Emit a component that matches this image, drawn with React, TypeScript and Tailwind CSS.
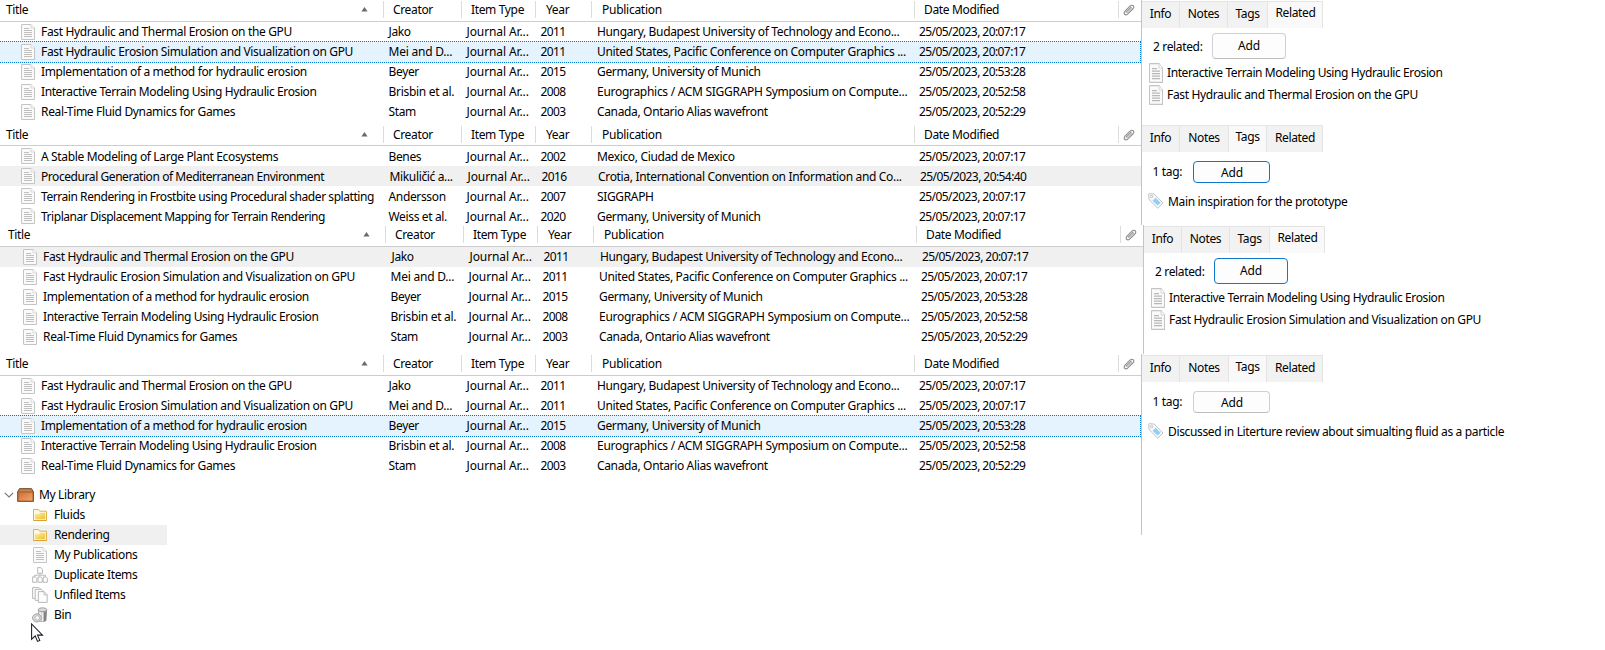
import React from "react";

type Row = { title: string; creator: string; year: string; pub: string; date: string; state?: "selected" | "inactive" };

const tracking: Record<string, string> = {
  "Fast Hydraulic Erosion Simulation and Visualization on GPU": "tracking-[-0.35px]",
  "Interactive Terrain Modeling Using Hydraulic Erosion": "tracking-[-0.4px]",
  "Real-Time Fluid Dynamics for Games": "tracking-[-0.33px]",
  "A Stable Modeling of Large Plant Ecosystems": "tracking-[-0.35px]",
  "Procedural Generation of Mediterranean Environment": "tracking-[-0.43px]",
  "Terrain Rendering in Frostbite using Procedural shader splatting": "tracking-[-0.44px]",
  "Triplanar Displacement Mapping for Terrain Rendering": "tracking-[-0.46px]",
  "Eurographics / ACM SIGGRAPH Symposium on Compute...": "tracking-[-0.29px]",
  "United States, Pacific Conference on Computer Graphics ...": "tracking-[-0.34px]",
  "Hungary, Budapest University of Technology and Econo...": "tracking-[-0.35px]",
  "Crotia, International Convention on Information and Co...": "tracking-[-0.33px]",
  "Journal Ar...": "tracking-[-0.1px]",
  "Mei and D...": "tracking-[-0.22px]",
  "Brisbin et al.": "tracking-[-0.3px]",
  Publication: "tracking-[-0.27px]",
  Add: "tracking-[-0.1px]",
};

function Text({ children, className = "" }: { children: string; className?: string }) {
  const digits = /^\d{4}$/.test(children) ? "tracking-[-0.65px]" : /^\d\d\//.test(children) ? "tracking-[-0.57px]" : "";
  return <span className={`whitespace-nowrap ${tracking[children] ?? (digits || "tracking-[-0.35px]")} ${className}`}>{children}</span>;
}

const jako: Row = { title: "Fast Hydraulic and Thermal Erosion on the GPU", creator: "Jako", year: "2011", pub: "Hungary, Budapest University of Technology and Econo...", date: "25/05/2023, 20:07:17" };
const mei: Row = { title: "Fast Hydraulic Erosion Simulation and Visualization on GPU", creator: "Mei and D...", year: "2011", pub: "United States, Pacific Conference on Computer Graphics ...", date: "25/05/2023, 20:07:17" };
const beyer: Row = { title: "Implementation of a method for hydraulic erosion", creator: "Beyer", year: "2015", pub: "Germany, University of Munich", date: "25/05/2023, 20:53:28" };
const brisbin: Row = { title: "Interactive Terrain Modeling Using Hydraulic Erosion", creator: "Brisbin et al.", year: "2008", pub: "Eurographics / ACM SIGGRAPH Symposium on Compute...", date: "25/05/2023, 20:52:58" };
const stam: Row = { title: "Real-Time Fluid Dynamics for Games", creator: "Stam", year: "2003", pub: "Canada, Ontario Alias wavefront", date: "25/05/2023, 20:52:29" };

const rendering: Row[] = [
  { title: "A Stable Modeling of Large Plant Ecosystems", creator: "Benes", year: "2002", pub: "Mexico, Ciudad de Mexico", date: "25/05/2023, 20:07:17" },
  { title: "Procedural Generation of Mediterranean Environment", creator: "Mikuličić a...", year: "2016", pub: "Crotia, International Convention on Information and Co...", date: "25/05/2023, 20:54:40", state: "inactive" },
  { title: "Terrain Rendering in Frostbite using Procedural shader splatting", creator: "Andersson", year: "2007", pub: "SIGGRAPH", date: "25/05/2023, 20:07:17" },
  { title: "Triplanar Displacement Mapping for Terrain Rendering", creator: "Weiss et al.", year: "2020", pub: "Germany, University of Munich", date: "25/05/2023, 20:07:17" },
];

function DocIcon({ tall = false }: { tall?: boolean }) {
  return (
    <svg width="14" height={tall ? 20 : 16} viewBox="0 0 14 16" preserveAspectRatio="none" className="shrink-0">
      <path d="M1 .5h9L13.5 4v11.5H1Q.5 15.5.5 15V1Q.5.5 1 .5Z" fill="#fafafa" stroke="#c4c4c4" />
      <path d="M10 .5V4h3.5" fill="#fff" stroke="#cfcfcf" strokeWidth=".8" />
      <path d="M3 4.5h5M3 6.5h8M3 8.5h8M3 10.5h8M3 12.5h8" stroke="#b8b8b8" strokeWidth=".9" />
    </svg>
  );
}

function Clip() {
  return (
    <svg width="12" height="12" viewBox="0 0 12 12" fill="none" strokeLinecap="round" strokeLinejoin="round">
      <path d="M3.2 8.2 8.2 3.2M2 7.2 7 2.2Q8.8.6 10.3 1.8 11.5 3.2 9.8 5L4.6 10.2Q3 11.4 1.6 10.3.6 9 2 7.2Z" stroke="#8d8d8d" strokeWidth="1.1" />
      <path d="M4.2 8.6 8.6 4.2" stroke="#c2c2c2" strokeWidth="1.3" />
    </svg>
  );
}

function TagIcon() {
  return (
    <svg width="16" height="16" viewBox="0 0 16 16" className="shrink-0">
      <path d="M.7 1.2Q.7.7 1.2.7L6.2 1 15 10 9.7 15.3 1 6.4Z" fill="#f8f8f8" stroke="#bfc3c6" strokeLinejoin="round" />
      <path d="M7.6 4.7 12.6 9.7 9.5 12.6 4.6 7.8Z" fill="#8fd0fb" />
      <circle cx="3.6" cy="3.6" r="1.1" fill="#fff" stroke="#b0b0b0" strokeWidth=".8" />
    </svg>
  );
}

const columns = [
  { label: "Creator", w: "w-[78px]", head: "pl-[9px]", cell: "pl-[5.5px]" },
  { label: "Item Type", w: "w-[74px]", head: "pl-[9px]", cell: "pl-[5.5px]" },
  { label: "Year", w: "w-[56px]", head: "pl-[10px]", cell: "pl-[5.5px]" },
  { label: "Publication", w: "w-[323px]", head: "pl-[10px]", cell: "pl-[6px]" },
  { label: "Date Modified", w: "w-[204px]", head: "pl-[9px]", cell: "pl-[5px]" },
];

function Table({ rows, shifted = false, low = false }: { rows: Row[]; shifted?: boolean; low?: boolean }) {
  const drop = low ? "relative top-px" : "";
  return (
    <div className={shifted ? "w-[1143px]" : "w-[1141px]"}>
      <div className={`flex h-[22px] border-b border-[#cdcdcd] pt-px ${shifted ? "pl-[2px]" : ""}`}>
        <div className={`flex h-[17px] w-[383px] items-center justify-between pr-[15px] pl-[6px] ${drop}`}>
          <Text>Title</Text>
          <svg width="7" height="5" viewBox="0 0 7 5"><path d="M3.5 0 6.6 4.4H.4Z" fill="#6a6a6a" /></svg>
        </div>
        {columns.map((c) => (
          <div key={c.label} className={`flex h-[17px] items-center border-l border-[#dcdcdc] ${c.head} ${c.w} ${drop}`}><Text>{c.label}</Text></div>
        ))}
        <div className={`flex h-[17px] items-center border-l border-[#dcdcdc] pt-px pl-[4px] ${drop}`}><Clip /></div>
      </div>
      {rows.map((r) => (
        <div key={r.title} className={`relative flex h-[20px] items-center ${shifted ? "pl-[2px]" : ""} ${r.state === "selected" ? "bg-[#e5f3ff]" : r.state === "inactive" ? "bg-[#f0f0f0]" : ""}`}>
          {r.state === "selected" && <div className="absolute -top-px right-0 -bottom-px -left-px border border-dotted border-[#0078d7] bg-[#e5f3ff]" />}
          <div className={`relative flex shrink-0 items-center gap-[6px] pl-[21px] ${r.state === "inactive" ? "w-[384px]" : "w-[383px]"}`}><DocIcon /><Text className={drop}>{r.title}</Text></div>
          {[r.creator, "Journal Ar...", r.year, r.pub, r.date].map((v, i) => (
            <div key={i} className={`relative flex shrink-0 ${columns[i].cell} ${columns[i].w}`}><Text className={drop}>{v}</Text></div>
          ))}
        </div>
      ))}
    </div>
  );
}

function Tabs({ active }: { active: "Tags" | "Related" }) {
  const widths = active === "Tags" ? ["w-[38px]", "w-[49px]", "w-[38px]", "w-[56px]"] : ["w-[38px]", "w-[48px]", "w-[40px]", "w-[55px]"];
  return (
    <div className="flex h-[27px]">
      {["Info", "Notes", "Tags", "Related"].map((t, i) => (
        <div key={t} className={`flex justify-center border-t border-r border-[#e4e4e4] ${t === "Related" ? "pl-px" : ""} ${widths[i]} ${t === active ? "bg-[#f9f9f9] leading-[22px]" : "bg-[#f2f2f2] leading-[24px]"}`}>
          <Text>{t}</Text>
        </div>
      ))}
    </div>
  );
}

function Panel({ active, focused = false, items, height }: { active: "Tags" | "Related"; focused?: boolean; items: string[]; height: string }) {
  const border = focused ? "border-[#1179cc]" : "border-[#d0d0d0] border-b-[#bdbdbd]";
  return (
    <div className={`border-l border-[#c4c4c4] pt-px ${height}`}>
      <Tabs active={active} />
      {active === "Related" ? (
        <>
          <div className="flex pt-[5px] pl-[11px]">
            <Text className="w-[59px] leading-[28px]">{`${items.length} related:`}</Text>
            <button className={`flex h-[26px] w-[74px] justify-center rounded-[4px] border bg-[#fdfdfd] leading-[24px] ${border}`}><Text>Add</Text></button>
          </div>
          <div className="flex flex-col gap-[2px] pt-[2px] pl-[7px]">
            {items.map((t) => <div key={t} className="flex h-[20px] items-center gap-[4px]"><DocIcon tall /><Text>{t}</Text></div>)}
          </div>
        </>
      ) : (
        <>
          <div className="flex pt-[9px] pl-[10.5px]">
            <Text className="w-[40.5px] leading-[22px]">1 tag:</Text>
            <button className={`flex h-[22px] w-[77px] justify-center rounded-[4px] border bg-[#fdfdfd] pl-px leading-[22px] ${border}`}><Text>Add</Text></button>
          </div>
          <div className="mt-[8px] flex h-[20px] items-center gap-[4px] pl-[6px]"><TagIcon /><Text className="pt-[2px]">{items[0]}</Text></div>
        </>
      )}
    </div>
  );
}

function Folder() {
  return (
    <svg width="14" height="12" viewBox="1 1 14 12">
      <defs><linearGradient id="fold" x1="0" y1="0" x2="1" y2="1"><stop offset="0" stopColor="#fff0a0" /><stop offset="1" stopColor="#f0bd2c" /></linearGradient></defs>
      <path d="M1.5 12.5v-11h5l1.2 1.7h6.8v9.3Z" fill="#fff8dc" stroke="#dfb24c" strokeLinejoin="round" />
      <path d="M3.400 11V6.800h3.400L8.200 5.300h4.700V11Z" fill="url(#fold)" stroke="#efcc62" strokeWidth=".6" />
      <path d="M1.500 12.500h13" stroke="#d7a336" />
    </svg>
  );
}

function LibraryBox() {
  return (
    <svg width="17" height="14" viewBox="0 0 17 14">
      <defs><linearGradient id="box" x1="0" y1="0" x2="1" y2="1"><stop offset="0" stopColor="#d06f38" /><stop offset="1" stopColor="#f0a56a" /></linearGradient></defs>
      <path d="M2.500.6h12l2 3.200v9.600H.6V3.800Z" fill="#a9602c" stroke="#7d4a22" strokeWidth=".9" />
      <path d="M2.800 1.200h11.400L15.400 3.600H1.600Z" fill="#b98450" />
      <path d="M1.500 4.600h14v8H1.500Z" fill="url(#box)" />
    </svg>
  );
}

function Page({ d }: { d: string }) {
  return <path d={d} fill="#fcfcfc" stroke="#b2b2b2" strokeWidth=".9" strokeLinejoin="round" />;
}

function Duplicates() {
  return (
    <svg width="16" height="16" viewBox="0 0 16 16">
      <path d="M8 6v2.5M2.5 10V8.2h11V10" fill="none" stroke="#bbb" />
      <Page d="M5.6.6h3.2l1.700 1.700v4H5.600Z" />
      <Page d="M.6 9.900h2.800l1.400 1.400v4H.6Z" />
      <Page d="M6 9.900h2.800l1.400 1.400v4H6Z" />
      <Page d="M11.200 9.900H14l1.400 1.400v4h-4.200Z" />
    </svg>
  );
}

function Unfiled() {
  return (
    <svg width="16" height="16" viewBox="0 0 16 16">
      <Page d="M.6.6h6.400L9 2.600v8.800H.6Z" />
      <Page d="M3.200 2.400H9.600L11.800 4.600v8.800H3.200Z" />
      <Page d="M6.400 4.600h5.600l3.200 3.200v7.600H6.400Z" />
      <path d="M12 4.600v3.200h3.200" fill="none" stroke="#b2b2b2" strokeWidth=".8" />
    </svg>
  );
}

function Bin() {
  return (
    <svg width="16" height="16" viewBox="0 0 16 16">
      <defs><linearGradient id="bin"><stop offset="0" stopColor="#f0f0f0" /><stop offset=".6" stopColor="#c2c2c2" /><stop offset="1" stopColor="#666" /></linearGradient></defs>
      <path d="M6.400 3.200 7 13.800Q10.500 15.600 14 13.800L14.600 3.200Z" fill="url(#bin)" stroke="#8a8a8a" strokeWidth=".7" />
      <path d="M8.600 5.400v8.400M10.600 5.400v9" stroke="#f6f6f6" strokeWidth=".9" />
      <path d="M12.600 5.400v8.400" stroke="#777" strokeWidth=".9" />
      <ellipse cx="10.500" cy="2.700" rx="4.300" ry="1.900" fill="#dcdcdc" stroke="#8a8a8a" strokeWidth=".8" />
      <ellipse cx="4.900" cy="10.900" rx="4.400" ry="4.100" fill="#d9d9d9" stroke="#949494" strokeWidth=".8" />
      <ellipse cx="5.300" cy="10.900" rx="2.300" ry="2.200" fill="#f8f8f8" stroke="#a8a8a8" strokeWidth=".7" />
    </svg>
  );
}

const tree = [
  { label: "Fluids", icon: <Folder /> },
  { label: "Rendering", icon: <Folder /> },
  { label: "My Publications", icon: <DocIcon /> },
  { label: "Duplicate Items", icon: <Duplicates /> },
  { label: "Unfiled Items", icon: <Unfiled /> },
  { label: "Bin", icon: <Bin /> },
];

function Library() {
  return (
    <div className="relative w-[167px]">
      <div className="flex h-[20px] items-center pl-[4px]">
        <svg width="10" height="6" viewBox="0 0 10 6" fill="none" stroke="#777" strokeWidth="1.2"><path d="m.8.8 4.200 4.200L9.200.8" /></svg>
        <span className="mr-[5px] ml-[3px]"><LibraryBox /></span>
        <Text>My Library</Text>
      </div>
      {tree.map((n) => (
        <div key={n.label} className={`flex h-[20px] items-center pl-[32px] ${n.label === "Rendering" ? "bg-[#f0f0f0]" : ""}`}>
          <span className="mr-[6px] flex w-[16px] justify-center">{n.icon}</span><Text>{n.label}</Text>
        </div>
      ))}
      <svg width="13" height="20" viewBox="0 0 13 20" className="absolute top-[138px] left-[31px]">
        <path d="M.6 1v15.200l3.600-3.400 2.300 5.600 2.300-1-2.300-5.300h5Z" fill="#fff" stroke="#1a1a26" strokeWidth="1.05" />
      </svg>
    </div>
  );
}

export default function App() {
  return (
    <div className="h-[650px] w-[1605px] overflow-hidden bg-white font-['Noto_Sans',sans-serif] text-[12px] leading-[20px] text-black">
      <section className="flex h-[124px]">
        <Table rows={[jako, { ...mei, state: "selected" }, beyer, brisbin, stam]} />
        <Panel height="h-[124px]" active="Related" items={[brisbin.title, jako.title]} />
      </section>
      <section className="flex h-[101px]">
        <Table rows={rendering} low />
        <Panel height="h-[101px]" active="Tags" focused items={["Main inspiration for the prototype"]} />
      </section>
      <section className="flex h-[129px]">
        <Table shifted rows={[{ ...jako, state: "inactive" }, mei, beyer, brisbin, stam]} />
        <Panel height="h-[129px]" active="Related" focused items={[brisbin.title, mei.title]} />
      </section>
      <section className="flex">
        <div>
          <div className="h-[131px]"><Table rows={[jako, mei, { ...beyer, state: "selected" }, brisbin, stam]} /></div>
          <Library />
        </div>
        <Panel height="h-[181px]" active="Tags" items={["Discussed in Literture review about simualting fluid as a particle"]} />
      </section>
    </div>
  );
}
